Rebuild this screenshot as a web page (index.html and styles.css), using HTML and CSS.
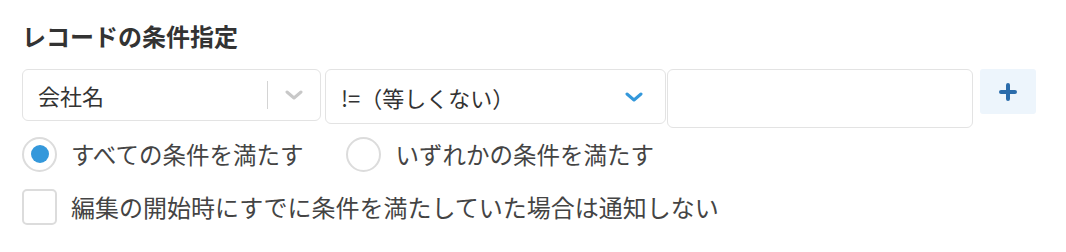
FILE: index.html
```html
<!DOCTYPE html>
<html lang="ja">
<head>
  <meta charset="UTF-8" />
  <title>レコードの条件指定</title>
  <link rel="stylesheet" href="styles.css">
</head>
<body>

  <section class="condition">
    <h2 class="condition-title">レコードの条件指定</h2>

    <div class="filter-row">
      <div class="select field-select">
        <span class="select-text">会社名</span>
        <span class="select-divider"></span>
        <svg class="chevron" width="18" height="10" viewBox="0 0 18 10">
          <path d="M2 2 L9 8 L16 2" fill="none" stroke="#c8c8c8" stroke-width="3" stroke-linecap="round" stroke-linejoin="round"/>
        </svg>
      </div>

      <div class="select op-select">
        <span class="select-text">!=（等しくない）</span>
        <svg class="chevron" width="18" height="10" viewBox="0 0 18 10">
          <path d="M2 2 L9 8 L16 2" fill="none" stroke="#3498db" stroke-width="3" stroke-linecap="round" stroke-linejoin="round"/>
        </svg>
      </div>

      <input class="value-input" type="text">

      <button class="add-btn" aria-label="追加">
        <svg width="18" height="18" viewBox="0 0 18 18">
          <path d="M9 2 V16 M2 9 H16" stroke="#2b6cab" stroke-width="4" stroke-linecap="round"/>
        </svg>
      </button>
    </div>

    <div class="radio-row">
      <label class="radio checked"><span class="radio-mark"></span>すべての条件を満たす</label>
      <label class="radio"><span class="radio-mark"></span>いずれかの条件を満たす</label>
    </div>

    <label class="checkbox"><span class="checkbox-mark"></span>編集の開始時にすでに条件を満たしていた場合は通知しない</label>
  </section>

</body>
</html>
```

FILE: styles.css
```css
* {
  box-sizing: border-box;
  margin: 0;
  padding: 0;
}

body {
  font-family: "Noto Sans CJK JP", "Noto Sans", sans-serif;
  background-color: #fff;
  color: #333;
}

/* CONDITION BLOCK */
.condition {
  padding: 18px 0 0 22px;
}

.condition-title {
  font-size: 24px;
  font-weight: bold;
  line-height: 36px;
  margin-bottom: 15px;
  color: #333;
}

/* FILTER ROW */
.filter-row {
  display: flex;
  align-items: flex-start;
}

.select {
  display: flex;
  align-items: center;
  border: 1px solid #e3e3e3;
  border-radius: 6px;
  background-color: #fff;
  padding-left: 15px;
}

.select-text {
  font-size: 22px;
  flex: 1;
  white-space: nowrap;
}

.field-select {
  width: 299px;
  height: 52px;
  padding-right: 17px;
}

.select-divider {
  width: 1px;
  height: 28px;
  background-color: #d4d4d4;
  margin-right: 17px;
}

.op-select {
  width: 341px;
  height: 55px;
  margin-left: 4px;
  padding-right: 22px;
}

.chevron {
  display: block;
}

.value-input {
  width: 306px;
  height: 59px;
  margin-left: 1px;
  border: 1px solid #e3e3e3;
  border-radius: 6px;
  outline: none;
}

.add-btn {
  width: 56px;
  height: 45px;
  margin-left: 7px;
  border: none;
  border-radius: 3px;
  background-color: #edf5fc;
  display: flex;
  align-items: center;
  justify-content: center;
  cursor: pointer;
}

/* RADIO */
.radio-row {
  display: flex;
  margin-top: 8px;
  gap: 43px;
}

.radio,
.checkbox {
  display: flex;
  align-items: center;
  font-size: 23.5px;
  line-height: 36px;
  color: #444;
}

.radio-mark {
  width: 35px;
  height: 35px;
  border: 2px solid #dcdcdc;
  border-radius: 50%;
  margin-right: 14px;
  display: flex;
  align-items: center;
  justify-content: center;
}

.radio.checked .radio-mark::after {
  content: "";
  width: 18px;
  height: 18px;
  border-radius: 50%;
  background-color: #3498db;
}

/* CHECKBOX */
.checkbox {
  margin-top: 17px;
  font-size: 24px;
}

.checkbox-mark {
  width: 35px;
  height: 36px;
  border: 2px solid #dcdcdc;
  border-radius: 5px;
  margin-right: 14px;
}
```
